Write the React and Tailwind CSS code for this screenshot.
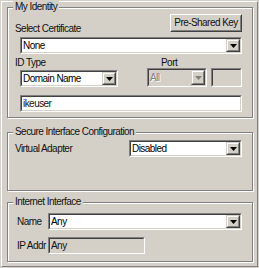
import React from "react"

/* Win2000 style IKE identity panel */

function Sunken({ className = "", bg = "bg-white", children }) {
  return (
    <div className={`border border-t-[#808080] border-l-[#808080] border-r-white border-b-white ${className}`}>
      <div className={`h-full border border-t-[#404040] border-l-[#404040] border-r-[#d4d0c8] border-b-[#d4d0c8] flex items-center ${bg}`}>
        {children}
      </div>
    </div>
  )
}

function Arrow({ disabled }) {
  return (
    <svg width="7" height="4" viewBox="0 0 7 4" className="block">
      <path d="M0 0h7L3.5 4z" fill={disabled ? "#808080" : "#000"} />
    </svg>
  )
}

function Combo({ value, className = "", disabled }) {
  return (
    <Sunken className={className} bg={disabled ? "bg-[#d4d0c8]" : "bg-white"}>
      <span
        className={`flex-1 pl-px leading-[12px] truncate ${
          disabled ? "text-[#808080] [text-shadow:1px_1px_0_#fff]" : "text-black"
        }`}
      >
        {value}
      </span>
      <div className="h-full w-[14px] border border-t-[#d4d0c8] border-l-[#d4d0c8] border-r-[#404040] border-b-[#404040]">
        <div className="h-full border border-t-white border-l-white border-r-[#808080] border-b-[#808080] bg-[#d4d0c8] flex items-center justify-center">
          <Arrow disabled={disabled} />
        </div>
      </div>
    </Sunken>
  )
}

function Group({ title, className = "", children }) {
  return (
    <div className={`relative mr-[4px] ml-[5px] border border-[#808080] shadow-[inset_1px_1px_0_#fff,1px_1px_0_#fff] ${className}`}>
      <span className="absolute -top-[7px] left-[5px] bg-[#d4d0c8] px-[2px] leading-[12px] whitespace-nowrap">
        {title}
      </span>
      {children}
    </div>
  )
}

export default function App() {
  return (
    <div
      className="w-[259px] h-[268px] bg-[#d4d0c8] p-px text-[10px] tracking-[-0.55px] text-[#111]"
      style={{ fontFamily: '"Liberation Sans", Arial, sans-serif' }}
    >
      <div className="h-full border border-t-white border-l-white border-r-[#808080] border-b-[#808080] pt-[5px]">

        {/* My Identity */}
        <Group title="My Identity" className="h-[111px] pt-[6px] pl-[7px] pr-[10px]">
          <div className="flex items-start justify-between">
            <span className="mt-[9px] leading-[12px]">Select Certificate</span>
            <button className="w-[72px] h-[18px] border border-t-white border-l-white border-r-[#404040] border-b-[#404040]">
              <div className="h-full border border-t-[#d4d0c8] border-l-[#d4d0c8] border-r-[#808080] border-b-[#808080] flex items-center justify-center leading-[12px] whitespace-nowrap">
                Pre-Shared Key
              </div>
            </button>
          </div>

          <Combo value="None" className="ml-[5px] mt-[2px] h-[17px]" />

          <div className="flex mt-[3px] h-[11px] leading-[12px]">
            <span className="w-[146px]">ID Type</span>
            <span>Port</span>
          </div>

          <div className="flex pl-[5px] gap-[4px] items-start">
            <Combo value="Domain Name" className="w-[98px] h-[17px] mt-[2px] mr-[25px]" />
            <Combo value="All" disabled className="w-[60px] h-[19px]" />
            <Sunken className="w-[31px] h-[19px]" bg="bg-[#d4d0c8]" />
          </div>

          <Sunken className="ml-[5px] mt-[8px] h-[17px]">
            <span className="pl-px leading-[12px]">ikeuser</span>
          </Sunken>
        </Group>

        {/* Secure Interface Configuration */}
        <Group title="Secure Interface Configuration" className="mt-[14px] h-[59px] pt-[7px] pl-[7px] pr-[10px]">
          <div className="flex items-center justify-between">
            <span className="leading-[12px]">Virtual Adapter</span>
            <Combo value="Disabled" className="w-[113px] h-[17px]" />
          </div>
        </Group>

        {/* Internet Interface */}
        <Group title="Internet Interface" className="mt-[11px] h-[60px] pt-[10px] pl-[9px] pr-[10px]">
          <div className="flex items-center">
            <span className="w-[31px] leading-[12px]">Name</span>
            <Combo value="Any" className="flex-1 h-[17px]" />
          </div>
          <div className="flex items-center mt-[7px]">
            <span className="w-[31px] leading-[12px] whitespace-nowrap">IP Addr</span>
            <Sunken className="w-[97px] h-[17px]" bg="bg-[#d4d0c8]">
              <span className="pl-px leading-[12px]">Any</span>
            </Sunken>
          </div>
        </Group>

      </div>
    </div>
  )
}
